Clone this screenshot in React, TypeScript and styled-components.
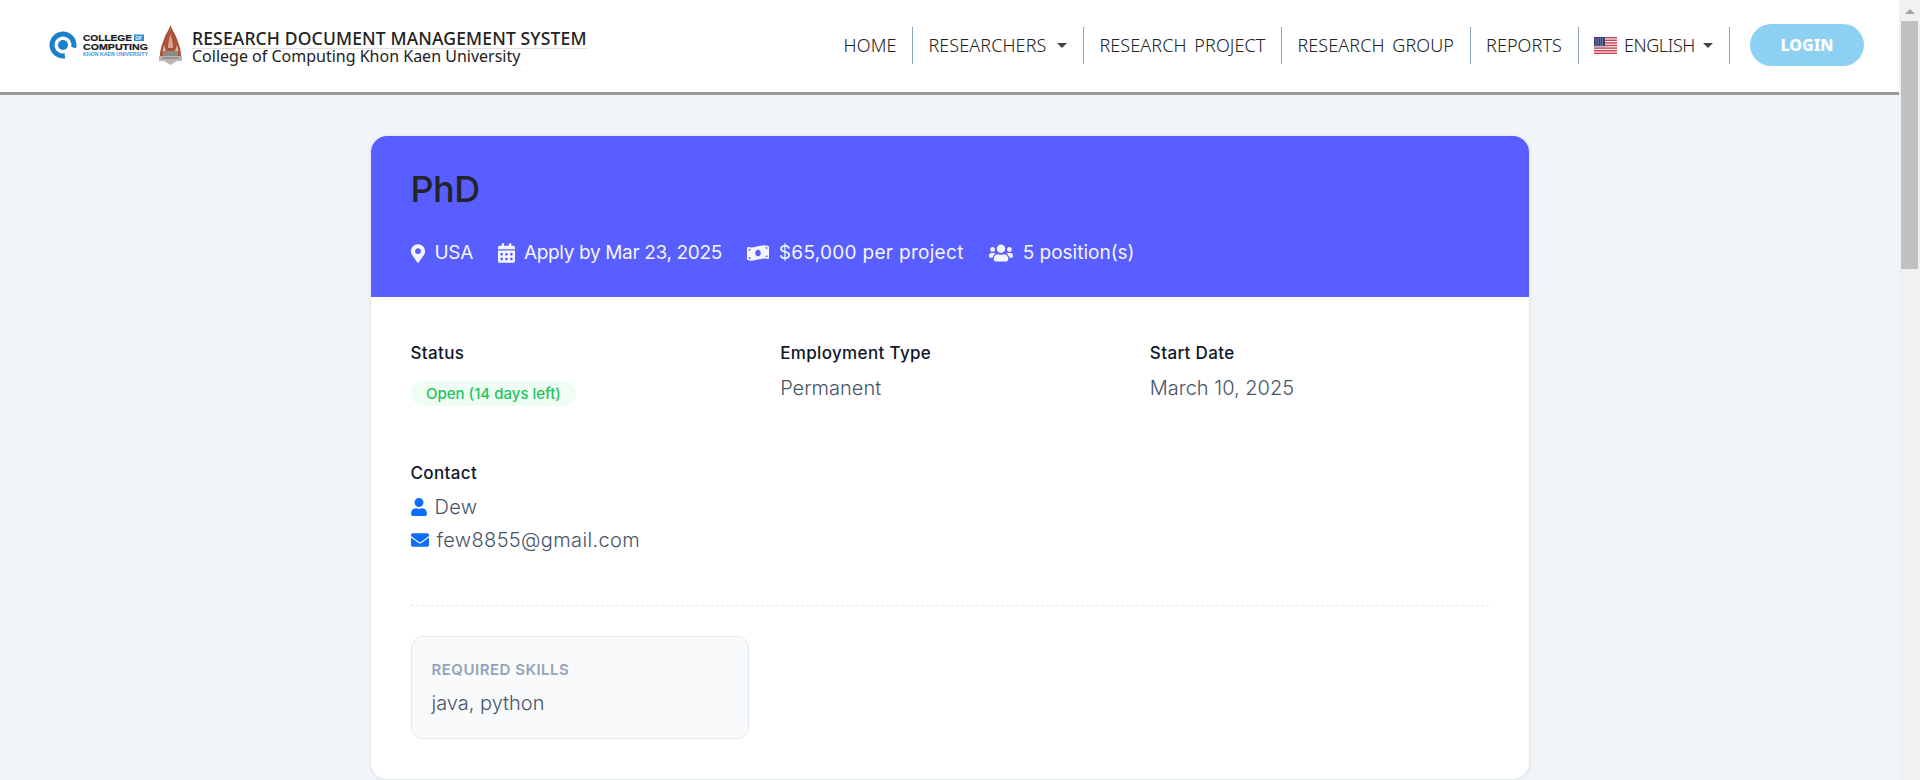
import React from 'react'
import styled, { createGlobalStyle } from 'styled-components'
import {
  FaMapMarkerAlt,
  FaCalendarAlt,
  FaMoneyBillWave,
  FaUsers,
  FaUser,
  FaEnvelope,
} from 'react-icons/fa'

const GlobalStyle = createGlobalStyle`
  html, body {
    margin: 0;
    height: 100%;
    overflow: hidden;
    background: #f1f5f9;
  }
  * {
    box-sizing: border-box;
  }
`

const CollegeLogo = () => (
  <svg width="103" height="28" viewBox="0 0 103 28">
    <circle cx="14" cy="14" r="11" fill="none" stroke="#1b7fc9" strokeWidth="5" strokeDasharray="56 13.1" transform="rotate(80 14 14)" />
    <circle cx="14" cy="14" r="5" fill="#1b7fc9" />
    <text x="34" y="9.8" fontFamily="Liberation Sans, sans-serif" fontWeight="700" fontSize="9.2" fill="#1a1a1a" stroke="#1a1a1a" strokeWidth="0.2" textLength="49" lengthAdjust="spacingAndGlyphs">COLLEGE</text>
    <rect x="85" y="3.5" width="10" height="6.5" fill="#2a8fd6" />
    <text x="86.2" y="8.8" fontFamily="Liberation Sans, sans-serif" fontWeight="700" fontSize="5" fill="#fff">OF</text>
    <text x="34" y="18.8" fontFamily="Liberation Sans, sans-serif" fontWeight="700" fontSize="9.2" fill="#1a1a1a" stroke="#1a1a1a" strokeWidth="0.2" textLength="65" lengthAdjust="spacingAndGlyphs">COMPUTING</text>
    <text x="34" y="25" fontFamily="Liberation Sans, sans-serif" fontWeight="700" fontSize="5.2" fill="#3b95d9" textLength="65" lengthAdjust="spacingAndGlyphs">KHON KAEN UNIVERSITY</text>
  </svg>
)

const Emblem = () => (
  <svg width="23" height="40" viewBox="0 0 23 40">
    <path d="M11.5 0 C13 5 16 8 18 14 C20 20 22 24 22 31 L1 31 C1 24 3 20 5 14 C7 8 10 5 11.5 0 Z" fill="#a8533a" />
    <path d="M11.5 9 C12.5 13 14 17 14 23 L9 23 C9 17 10.5 13 11.5 9 Z" fill="#d9a58e" />
    <path d="M5 20 L7 26 L3.5 26 Z M18 20 L19.5 26 L16 26 Z" fill="#dcb6a4" />
    <path d="M0 31 L23 31 L23 36 L18 36 L11.5 40 L5 36 L0 36 Z" fill="#b9b5b0" />
    <rect x="4" y="26" width="15" height="5" fill="#8f8a85" />
    <path d="M3 33 H20" stroke="#77726d" strokeWidth="1" />
  </svg>
)

const FlagUs = () => (
  <svg width="23" height="17" viewBox="0 0 23 17">
    <rect width="23" height="17" fill="#f3f0f0" />
    {[0, 2.6, 5.2, 7.8, 10.4, 13, 15.6].map((y) => (
      <rect key={y} y={y} width="23" height="1.4" fill="#c8434f" />
    ))}
    <rect width="11" height="9.2" fill="#3b3f77" />
    {[1.5, 3.7, 5.9, 8.1].map((x) =>
      [1.5, 3.6, 5.7, 7.8].map((y) => (
        <rect key={`${x}-${y}`} x={x} y={y} width="0.9" height="0.9" fill="#c9cbe0" />
      ))
    )}
  </svg>
)

const App = () => {
  return (
    <Screen>
      <GlobalStyle />
      <Page>
        <NavBar>
          <Brand>
            <CollegeLogo />
            <EmblemSlot>
              <Emblem />
            </EmblemSlot>
            <BrandText>
              <BrandTitle>RESEARCH DOCUMENT MANAGEMENT SYSTEM</BrandTitle>
              <BrandSub>College of Computing Khon Kaen University</BrandSub>
            </BrandText>
          </Brand>
          <NavMenu>
            <NavItem>HOME</NavItem>
            <NavItem>
              RESEARCHERS
              <Caret />
            </NavItem>
            <NavItem>RESEARCH PROJECT</NavItem>
            <NavItem>RESEARCH GROUP</NavItem>
            <NavItem>REPORTS</NavItem>
            <NavItem>
              <FlagUs />
              <LangLabel>ENGLISH</LangLabel>
              <Caret />
            </NavItem>
          </NavMenu>
          <LoginButton>LOGIN</LoginButton>
        </NavBar>

        <Content>
          <Card>
            <CardHeader>
              <JobTitle>PhD</JobTitle>
              <MetaRow>
                <MetaItem $spacing={-0.3}>
                  <PinIcon />
                  USA
                </MetaItem>
                <MetaItem $spacing={-0.35}>
                  <CalendarIcon />
                  Apply by Mar 23, 2025
                </MetaItem>
                <MetaItem $spacing={0.3}>
                  <MoneyIcon />
                  $65,000 per project
                </MetaItem>
                <MetaItem $spacing={0}>
                  <UsersIcon />
                  5 position(s)
                </MetaItem>
              </MetaRow>
            </CardHeader>

            <CardBody>
              <InfoGrid>
                <Field>
                  <FieldLabel>Status</FieldLabel>
                  <StatusBadge>Open (14 days left)</StatusBadge>
                </Field>
                <Field>
                  <FieldLabel>Employment Type</FieldLabel>
                  <FieldValue>Permanent</FieldValue>
                </Field>
                <Field>
                  <FieldLabel>Start Date</FieldLabel>
                  <FieldValue>March 10, 2025</FieldValue>
                </Field>
                <Field>
                  <FieldLabel>Contact</FieldLabel>
                  <ContactList>
                    <ContactRow>
                      <PersonIcon />
                      Dew
                    </ContactRow>
                    <ContactRow>
                      <MailIcon />
                      few8855@gmail.com
                    </ContactRow>
                  </ContactList>
                </Field>
              </InfoGrid>

              <Divider />

              <InfoGrid>
                <SkillBox>
                  <SkillTitle>REQUIRED SKILLS</SkillTitle>
                  <SkillValue>java, python</SkillValue>
                </SkillBox>
              </InfoGrid>
            </CardBody>
          </Card>
        </Content>
      </Page>

      <ScrollRail>
        <ScrollArrow />
        <ScrollThumb />
      </ScrollRail>
    </Screen>
  )
}

export default App

const Screen = styled.div`
  display: flex;
  width: 100%;
  height: 780px;
  overflow: hidden;
`

const Page = styled.div`
  flex: 1;
  min-width: 0;
  background: #f1f5f9;
`

const NavBar = styled.header`
  display: flex;
  align-items: center;
  height: 95px;
  padding: 0 35px 2px 49px;
  background: #fff;
  border-bottom: 3px solid #999;
`

const Brand = styled.div`
  display: flex;
  align-items: center;
`

const EmblemSlot = styled.div`
  display: flex;
  margin-left: 7px;
`

const BrandText = styled.div`
  display: flex;
  flex-direction: column;
  margin: 2px 0 0 10px;
  font-family: 'Noto Sans', sans-serif;
  color: #222;
`

const BrandTitle = styled.div`
  font-size: 17.5px;
  font-weight: 500;
  line-height: 18px;
  letter-spacing: 0.15px;
  padding-bottom: 1px;
  border-bottom: 1px solid #e2e2e2;
  white-space: nowrap;
`

const BrandSub = styled.div`
  font-size: 16px;
  line-height: 14px;
  white-space: nowrap;
`

const NavMenu = styled.nav`
  display: flex;
  align-items: center;
  margin-left: auto;
`

const NavItem = styled.div`
  display: flex;
  align-items: center;
  height: 37px;
  padding: 0 16px 0 15px;
  border-right: 1px solid #8ea3b8;
  font-family: 'Noto Sans', sans-serif;
  font-size: 18px;
  font-weight: 300;
  letter-spacing: 0.08px;
  word-spacing: 3px;
  line-height: 24px;
  color: #222;
  white-space: nowrap;
`

const LangLabel = styled.span`
  margin: 0 -3px 0 7px;
  letter-spacing: -0.4px;
`

const Caret = styled.span`
  width: 0;
  height: 0;
  margin-left: 11px;
  border-top: 5px solid #444;
  border-left: 5px solid transparent;
  border-right: 5px solid transparent;
`

const LoginButton = styled.div`
  display: flex;
  align-items: center;
  justify-content: center;
  width: 114px;
  height: 42px;
  margin-left: 20px;
  border-radius: 21px;
  background: #8cd1f2;
  color: #fff;
  font-family: 'Noto Sans', sans-serif;
  font-size: 16px;
  font-weight: 800;
`

const Content = styled.main`
  display: flex;
  justify-content: center;
  padding-top: 41px;
`

const Card = styled.section`
  width: 1158px;
  border-radius: 16px;
  background: #fff;
  overflow: hidden;
  box-shadow: 0 1px 4px rgba(100, 116, 139, 0.18);
`

const CardHeader = styled.div`
  height: 161px;
  padding: 29px 40px 0;
  background: #585eff;
`

const JobTitle = styled.h1`
  margin: 0;
  font-family: Inter, sans-serif;
  font-size: 36px;
  font-weight: 500;
  line-height: 48px;
  letter-spacing: -0.5px;
  color: #212529;
`

const MetaRow = styled.div`
  display: flex;
  gap: 25px;
  margin-top: 28px;
`

const MetaItem = styled.div<{ $spacing: number }>`
  display: flex;
  align-items: center;
  gap: 10px;
  font-family: Inter, sans-serif;
  font-size: 19px;
  line-height: 24px;
  letter-spacing: ${(p) => p.$spacing}px;
  color: #f4f5ff;
`

const PinIcon = styled(FaMapMarkerAlt)`
  flex: none;
  width: 14px;
  height: 19px;
`

const CalendarIcon = styled(FaCalendarAlt)`
  flex: none;
  width: 17px;
  height: 20px;
  margin-right: -1px;
`

const MoneyIcon = styled(FaMoneyBillWave)`
  flex: none;
  width: 22px;
  height: 22px;
`

const UsersIcon = styled(FaUsers)`
  flex: none;
  width: 24px;
  height: 24px;
`

const CardBody = styled.div`
  padding: 44px 40px 40px;
`

const InfoGrid = styled.div`
  display: grid;
  grid-template-columns: repeat(3, 1fr);
  gap: 55px 31px;
`

const Field = styled.div`
  display: flex;
  flex-direction: column;
  align-items: flex-start;
`

const FieldLabel = styled.div`
  font-family: Inter, sans-serif;
  font-size: 17px;
  font-weight: 500;
  line-height: 24px;
  letter-spacing: 0.35px;
  color: #0f172a;
`

const FieldValue = styled.div`
  margin-top: 10px;
  font-family: Inter, sans-serif;
  font-size: 20px;
  font-weight: 300;
  line-height: 27px;
  color: #475569;
`

const StatusBadge = styled.div`
  margin-top: 16px;
  padding: 0 15.5px;
  height: 25px;
  border-radius: 13px;
  background: #f0fdf4;
  color: #22c55e;
  font-family: Inter, sans-serif;
  font-size: 15px;
  font-weight: 500;
  line-height: 25px;
`

const ContactList = styled.div`
  margin-top: 5px;
`

const ContactRow = styled.div`
  display: flex;
  align-items: center;
  gap: 8px;
  height: 33px;
  font-family: Inter, sans-serif;
  font-size: 20px;
  font-weight: 300;
  letter-spacing: 0.35px;
  color: #475569;
`

const PersonIcon = styled(FaUser)`
  flex: none;
  width: 16px;
  height: 18px;
  color: #0d6efd;
`

const MailIcon = styled(FaEnvelope)`
  flex: none;
  width: 18px;
  height: 18px;
  color: #0d6efd;
`

const Divider = styled.hr`
  margin: 49px 0 30px;
  border: 0;
  border-top: 1px dashed #e2e8f0;
`

const SkillBox = styled.div`
  height: 103px;
  padding: 23px 20px 0;
  border: 1px solid #e2e8f0;
  border-radius: 12px;
  background: #f8fafc;
`

const SkillTitle = styled.div`
  font-family: Inter, sans-serif;
  font-size: 15px;
  font-weight: 600;
  line-height: 20px;
  letter-spacing: 0.5px;
  color: #94a3b8;
`

const SkillValue = styled.div`
  margin-top: 10px;
  font-family: Inter, sans-serif;
  font-size: 20px;
  font-weight: 300;
  line-height: 27px;
  color: #475569;
`

const ScrollRail = styled.aside`
  flex: none;
  width: 21px;
  height: 100%;
  padding: 9px 2px 0;
  background: #f1f1f1;
`

const ScrollArrow = styled.div`
  width: 0;
  height: 0;
  margin: 0 auto 7px;
  border-bottom: 5px solid #a3a3a3;
  border-left: 5px solid transparent;
  border-right: 5px solid transparent;
`

const ScrollThumb = styled.div`
  height: 248px;
  background: #c1c1c1;
`
